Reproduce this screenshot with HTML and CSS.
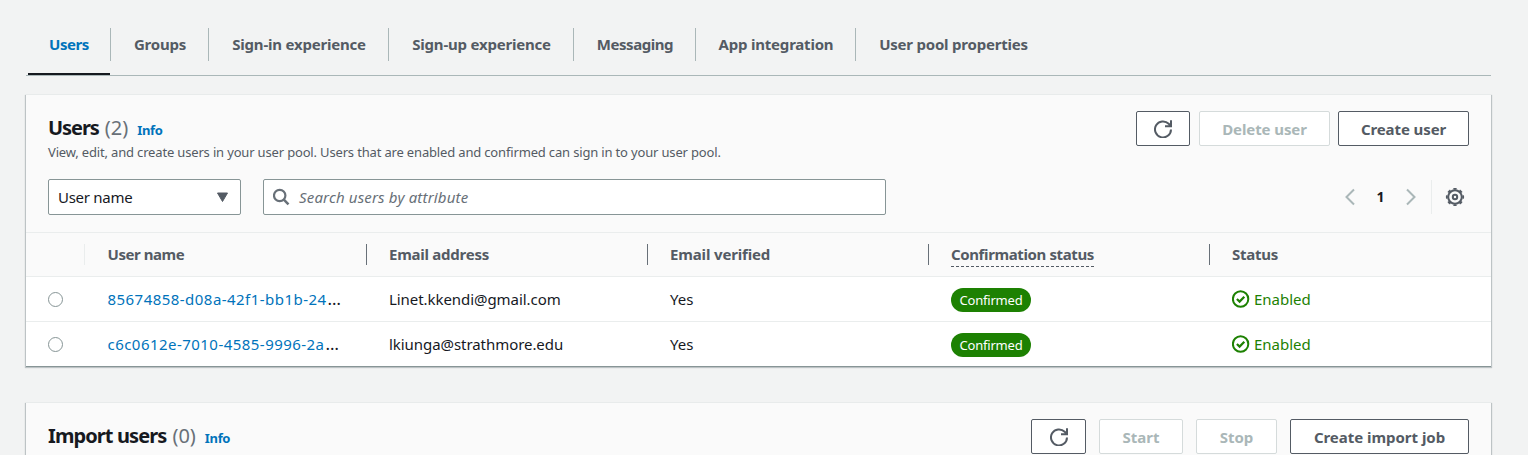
FILE: index.html
```html
<!DOCTYPE html>
<html lang="en">
<head>
<meta charset="utf-8">
<title>User pool</title>
<link rel="stylesheet" href="styles.css">
</head>
<body>
<svg class="defs" width="0" height="0" aria-hidden="true">
  <symbol id="refresh" viewBox="0 0 18 18"><path d="M17 9.500A8 8 0 1 1 14.700 3.800L16.500 5.600M17 .2v6h-6" fill="none" stroke="currentColor" stroke-width="2"/></symbol>
  <symbol id="check" viewBox="0 0 18 18"><circle cx="8.600" cy="9" r="7.700" fill="none" stroke="currentColor" stroke-width="2"/><path d="M4.900 9l2.700 2.600L12.300 6.800" fill="none" stroke="currentColor" stroke-width="2.200"/></symbol>
</svg>
<nav class="tabs">
  <a class="tab t1 active"><span>Users</span></a>
  <a class="tab t2"><span>Groups</span></a>
  <a class="tab t3"><span>Sign-in experience</span></a>
  <a class="tab t4"><span>Sign-up experience</span></a>
  <a class="tab t5"><span>Messaging</span></a>
  <a class="tab t6"><span>App integration</span></a>
  <a class="tab t7"><span>User pool properties</span></a>
</nav>
<main>
  <section class="panel">
    <header class="head">
      <div>
        <h2><span class="title title-users">Users</span><span class="count">(2)</span><a class="info">Info</a></h2>
        <p class="desc">View, edit, and create users in your user pool. Users that are enabled and confirmed can sign in to your user pool.</p>
      </div>
      <div class="actions">
        <button class="btn refresh"><svg width="18" height="18"><use href="#refresh"/></svg></button>
        <button class="btn delete" disabled>Delete user</button>
        <button class="btn create">Create user</button>
      </div>
    </header>
    <div class="filters">
      <div class="select"><span>User name</span><svg width="13" height="11" viewBox="0 0 13 11"><path d="M1.500 1h10L6.500 9.500z" fill="currentColor" stroke="currentColor" stroke-linejoin="round"/></svg></div>
      <div class="search"><svg width="18" height="18" viewBox="0 0 18 18"><circle cx="6.700" cy="7.500" r="5.700" fill="none" stroke="currentColor" stroke-width="2.200"/><path d="M10.600 11.400l4.900 4.900" stroke="currentColor" stroke-width="2.500"/></svg><span>Search users by attribute</span></div>
      <div class="pager">
        <svg class="arrow" width="12" height="18" viewBox="0 0 12 18"><path d="M10 1.500L2.500 9l7.500 7.500" fill="none" stroke="currentColor" stroke-width="2"/></svg>
        <b>1</b>
        <svg class="arrow" width="12" height="18" viewBox="0 0 12 18"><path d="M2 1.500L9.500 9 2 16.500" fill="none" stroke="currentColor" stroke-width="2"/></svg>
        <span class="gear"><svg width="20" height="20" viewBox="0 0 20 20" fill="none" stroke="currentColor"><circle cx="10" cy="10" r="6.800" stroke-width="2"/><circle cx="10" cy="10" r="8.200" stroke-width="1.800" pathLength="80" stroke-dasharray="5 5" stroke-dashoffset="2.500"/><circle cx="10" cy="10" r="2.200" stroke-width="2"/></svg></span>
      </div>
    </div>
    <div class="row thead">
      <div class="cell pick"></div>
      <div class="cell"><span class="col-name">User name</span></div>
      <div class="cell"><span class="col-mail">Email address</span></div>
      <div class="cell"><span class="col-verified">Email verified</span></div>
      <div class="cell"><span class="col-confirm">Confirmation status</span></div>
      <div class="cell"><span class="col-status">Status</span></div>
    </div>
    <div class="row">
      <div class="cell pick"><i class="radio"></i></div>
      <div class="cell"><a>85674858-d08a-42f1-bb1b-24</a><span class="more">…</span></div>
      <div class="cell"><span class="mail">Linet.kkendi@gmail.com</span></div>
      <div class="cell">Yes</div>
      <div class="cell"><span class="badge">Confirmed</span></div>
      <div class="cell ok"><svg width="18" height="18"><use href="#check"/></svg><span>Enabled</span></div>
    </div>
    <div class="row last">
      <div class="cell pick"><i class="radio"></i></div>
      <div class="cell"><a>c6c0612e-7010-4585-9996-2a</a><span class="more">…</span></div>
      <div class="cell"><span class="mail">lkiunga@strathmore.edu</span></div>
      <div class="cell">Yes</div>
      <div class="cell"><span class="badge">Confirmed</span></div>
      <div class="cell ok"><svg width="18" height="18"><use href="#check"/></svg><span>Enabled</span></div>
    </div>
  </section>
  <section class="panel">
    <header class="head short">
      <h2><span class="title title-import">Import users</span><span class="count">(0)</span><a class="info">Info</a></h2>
      <div class="actions import">
        <button class="btn refresh wide"><svg width="18" height="18"><use href="#refresh"/></svg></button>
        <button class="btn start" disabled>Start</button>
        <button class="btn stop" disabled>Stop</button>
        <button class="btn job">Create import job</button>
      </div>
    </header>
  </section>
</main>
</body>
</html>
```
FILE: styles.css
```css
* { box-sizing: border-box; }
body { margin: 0; background: #f2f3f3; color: #16191f; font: 15px/22px "Noto Sans", sans-serif; }
.defs { position: absolute; }
.tabs { display: flex; margin: 0 37px 0 26px; height: 76px; padding: 28px 0 0 2px; border-bottom: 1px solid #aab7b8; }
.tab { display: flex; flex-direction: column; align-items: center; height: 47px; white-space: nowrap; color: #545b64; font-weight: 700; line-height: 33px; letter-spacing: -.21px; background: linear-gradient(#aab7b8, #aab7b8) right top / 1px 33px no-repeat; }
.tab.active { width: 82px; background: none; color: #0073bb; box-shadow: inset 0 -2px #16191f; letter-spacing: -.45px; }
.tab.t2 { width: 99px; padding-left: 1px; background: linear-gradient(#aab7b8, #aab7b8) left top / 1px 33px no-repeat, linear-gradient(#aab7b8, #aab7b8) right top / 1px 33px no-repeat; }
.t3 { width: 180px; }
.t4 { width: 185px; }
.t5 { width: 122px; letter-spacing: -.45px; }
.t6 { width: 160px; }
.tab.t7 { width: 195px; background: none; }
main { display: flex; flex-direction: column; gap: 37px; padding: 19px 37px 0 26px; }
.panel { background: #fafafa; box-shadow: 0 -1px 0 #e8ebeb, 0 1px 0 0 #879596, 0 1px 1px 1px rgba(0,28,36,.22); }
.head { display: flex; justify-content: space-between; height: 84px; padding: 16px 22px 0; }
.head.short { height: 52px; }
h2 { display: flex; align-items: baseline; margin: 4px 0 0; font-size: 20px; line-height: 26px; font-weight: 400; white-space: nowrap; }
.title { font-weight: 700; letter-spacing: -.9px; }
.title-users { letter-spacing: -1.05px; }
.count { margin-left: 6px; color: #687078; }
.info { margin-left: 9px; color: #0073bb; font-size: 13px; font-weight: 700; letter-spacing: -.35px; }
.desc { margin: -1px 0 0; color: #545b64; font-size: 13px; line-height: 20px; letter-spacing: -.165px; white-space: nowrap; }
.actions { display: flex; gap: 8px; }
.actions.import { gap: 13px; }
.btn { height: 35px; padding: 0; display: grid; place-items: center; border: 1px solid #545b64; border-radius: 2px; background: #fff; color: #545b64; font: 700 15px/20px "Noto Sans", sans-serif; letter-spacing: -.03px; white-space: nowrap; }
.btn:disabled { border-color: #d5dbdb; color: #aab7b8; }
.refresh { width: 54px; margin-right: 1px; }
.refresh.wide { width: 55px; margin: 0; }
.delete, .create { width: 131px; letter-spacing: -.1px; }
.start { width: 84px; }
.stop { width: 81px; }
.job { width: 179px; }
.filters { display: flex; height: 53px; padding: 0 22px; }
.select, .search { display: flex; align-items: center; height: 36px; border: 1px solid #879596; border-radius: 2px; background: #fff; }
.select { width: 193px; justify-content: space-between; padding: 0 11px 0 9px; letter-spacing: -.27px; }
.select svg { color: #545b64; }
.search { width: 623px; margin-left: 22px; padding-left: 9px; gap: 8px; color: #687078; font-style: italic; letter-spacing: .17px; }
.pager { display: flex; align-items: center; height: 36px; margin-left: auto; color: #545b64; }
.pager b { width: 49px; text-align: center; color: #16191f; font-size: 14px; }
.arrow { color: #aab7b8; }
.gear { display: flex; align-items: center; height: 34px; margin-left: 14px; padding: 0 4px 0 13px; border-left: 1px solid #eaeded; }
.row { display: grid; grid-template-columns: 59px 282px 281px 281px 281px 281px; height: 45px; background: #fff; border-bottom: 1px solid #eaeded; }
.row.last { height: 44px; border-bottom: 0; }
.cell { display: flex; align-items: center; padding-left: 22px; white-space: nowrap; }
.cell:nth-child(2) { padding-left: 22.500px; }
.thead { height: 45px; border-top: 1px solid #eaeded; background: #fafafa; color: #545b64; font-weight: 700; letter-spacing: -.25px; }
.thead .cell { padding-bottom: 1px; background: linear-gradient(#687078, #687078) right 11px / 1px 21px no-repeat; }
.thead .cell:first-child { background-image: linear-gradient(#eaeded, #eaeded); }
.thead .cell:last-child { background: none; }
.col-name { letter-spacing: -.45px; }
.col-verified { letter-spacing: -.15px; }
.col-confirm { margin-top: 2px; padding-bottom: 2px; border-bottom: 1px dashed #545b64; line-height: 20px; letter-spacing: -.38px; }
.radio { width: 15px; height: 15px; border: 1px solid #879596; border-radius: 50%; background: #fff; }
.cell a { color: #0073bb; letter-spacing: .46px; }
.more { margin-left: 1px; font-size: 17px; }
.mail { letter-spacing: -.06px; }
.badge { width: 80px; height: 24px; margin-top: 1px; border-radius: 12px; background: #1d8102; color: #fff; font-size: 13px; line-height: 24px; letter-spacing: -.2px; text-align: center; }
.ok { gap: 4px; color: #1d8102; }
```
